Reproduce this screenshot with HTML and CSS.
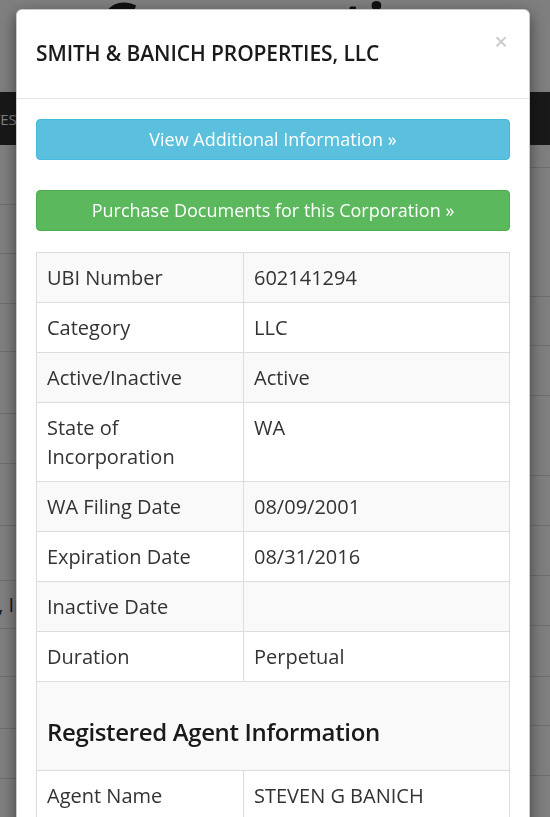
FILE: index.html
```html
<!DOCTYPE html>
<html>
<head>
<meta charset="utf-8">
<link rel="stylesheet" href="styles.css">
</head>
<body>
<div class="page">
  <h1 class="page-title">Corporations</h1>
  <nav class="navbar"><span class="nav-link">STATES</span></nav>
  <div class="bg-content">
    <div class="bg-col bg-left">
      <div class="bg-row h60"></div>
      <div class="bg-row h49"></div>
      <div class="bg-row h50"></div>
      <div class="bg-row h48"></div>
      <div class="bg-row h62"></div>
      <div class="bg-row h50"></div>
      <div class="bg-row h62"></div>
      <div class="bg-row h55"></div>
      <div class="bg-row h48"><span class="bg-text">Properties, Inc</span></div>
      <div class="bg-row h48"></div>
      <div class="bg-row h52"></div>
      <div class="bg-row h50"></div>
    </div>
    <div class="bg-spacer"></div>
    <div class="bg-col bg-right">
      <div class="bg-row h23"></div>
      <div class="bg-row h129"></div>
      <div class="bg-row h49"></div>
      <div class="bg-row h50"></div>
      <div class="bg-row h80"></div>
      <div class="bg-row h50"></div>
      <div class="bg-row h50"></div>
      <div class="bg-row h50"></div>
      <div class="bg-row h51"></div>
      <div class="bg-row h49"></div>
      <div class="bg-row h50"></div>
    </div>
  </div>
</div>
<div class="backdrop"></div>
<div class="modal">
  <div class="modal-header">
    <h4 class="modal-title">SMITH &amp; BANICH PROPERTIES, LLC</h4>
    <button class="close" type="button">×</button>
  </div>
  <div class="modal-body">
    <a class="btn btn-info">View Additional Information »</a>
    <a class="btn btn-success">Purchase Documents for this Corporation »</a>
    <table class="info-table">
      <colgroup><col class="col-label"><col></colgroup>
      <tr><td>UBI Number</td><td>602141294</td></tr>
      <tr><td>Category</td><td>LLC</td></tr>
      <tr><td>Active/Inactive</td><td>Active</td></tr>
      <tr><td>State of Incorporation</td><td>WA</td></tr>
      <tr><td>WA Filing Date</td><td>08/09/2001</td></tr>
      <tr><td>Expiration Date</td><td>08/31/2016</td></tr>
      <tr><td>Inactive Date</td><td></td></tr>
      <tr><td>Duration</td><td>Perpetual</td></tr>
      <tr><td colspan="2"><h3 class="section-title">Registered Agent Information</h3></td></tr>
      <tr><td>Agent Name</td><td>STEVEN G BANICH</td></tr>
      <tr><td>Address</td><td>1000 2ND AVE STE 3310</td></tr>
    </table>
  </div>
</div>
</body>
</html>
```

FILE: styles.css
```css
* { box-sizing: border-box; }

html, body {
  margin: 0;
  padding: 0;
  height: 817px;
  overflow: hidden;
}

body {
  font-family: "Open Sans", "DejaVu Sans", sans-serif;
  color: #333;
  background: #fff;
}

.page {
  width: 550px;
}

.page-title {
  margin: 0;
  padding: 0 0 44px 100px;
  font-size: 60px;
  line-height: 48px;
  font-weight: 700;
  color: #222;
  white-space: nowrap;
}

.navbar {
  height: 53px;
  background: #333;
  display: flex;
  align-items: center;
  overflow: hidden;
}

.nav-link {
  color: #fff;
  font-size: 15px;
  white-space: nowrap;
  margin-left: -34px;
}

.bg-content {
  display: flex;
}

.bg-col {
  display: flex;
  flex-direction: column;
}

.bg-left { width: 16px; }
.bg-right { width: 30px; }
.bg-spacer { flex: 1; }

.bg-row {
  border-bottom: 1px solid #ddd;
  display: flex;
  align-items: center;
  overflow: hidden;
}

.bg-left .bg-row { justify-content: flex-end; }

.bg-text {
  font-size: 20px;
  white-space: nowrap;
  color: #333;
  margin-right: -20px;
}

.h23 { height: 23px; }
.h48 { height: 48px; }
.h49 { height: 49px; }
.h50 { height: 50px; }
.h51 { height: 51px; }
.h52 { height: 52px; }
.h55 { height: 55px; }
.h60 { height: 60px; }
.h62 { height: 62px; }
.h80 { height: 80px; }
.h129 { height: 129px; }

.backdrop {
  position: fixed;
  inset: 0;
  background: rgba(0, 0, 0, 0.5);
}

.modal {
  position: absolute;
  top: 9px;
  left: 16px;
  width: 514px;
  background: #fff;
  border: 1px solid rgba(0, 0, 0, 0.2);
  border-radius: 6px;
  box-shadow: 0 5px 15px rgba(0, 0, 0, 0.5);
  overflow: hidden;
  height: 830px;
}

.modal-header {
  display: flex;
  justify-content: space-between;
  align-items: flex-start;
  padding: 28px 19px 30px 19px;
  border-bottom: 1px solid #e5e5e5;
}

.modal-title {
  margin: 0;
  font-size: 21px;
  line-height: 30px;
  font-weight: 600;
  color: #1a1a1a;
  letter-spacing: -0.1px;
}

.close {
  margin: -8px 2px 0 0;
  padding: 0;
  border: 0;
  background: transparent;
  font-family: "Open Sans", sans-serif;
  font-size: 24px;
  font-weight: 600;
  line-height: 21px;
  color: #000;
  opacity: 0.2;
}

.modal-body {
  padding: 20px 19px;
}

.btn {
  display: block;
  text-align: center;
  font-size: 18px;
  line-height: 23px;
  padding: 8px 12px;
  border: 1px solid transparent;
  border-radius: 4px;
  color: #fff;
}

.btn-info {
  background: #5bc0de;
  border-color: #46b8da;
  margin-bottom: 30px;
}

.btn-success {
  background: #5cb85c;
  border-color: #4cae4c;
  margin-bottom: 21px;
}

.info-table {
  width: 100%;
  border-collapse: collapse;
  border: 1px solid #ddd;
}

.col-label { width: 207px; }

.info-table td {
  border: 1px solid #ddd;
  padding: 10px;
  font-size: 20px;
  line-height: 29px;
  vertical-align: top;
}

.info-table tr:nth-child(odd) td {
  background: #f9f9f9;
}

.section-title {
  margin: 23px 0 11px;
  font-size: 24px;
  line-height: 34px;
  font-weight: 600;
  color: #1a1a1a;
  letter-spacing: -0.35px;
}
```
